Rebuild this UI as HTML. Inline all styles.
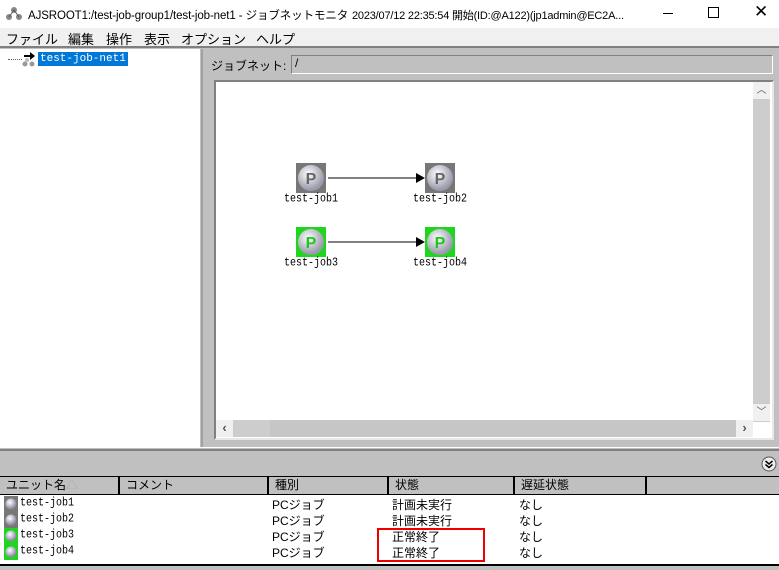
<!DOCTYPE html>
<html><head><meta charset="utf-8"><style>
*{margin:0;padding:0;box-sizing:border-box}
body{width:779px;height:570px;overflow:hidden;background:#c0c0c0;font-family:"Liberation Sans","Noto Sans CJK JP",sans-serif;position:relative;font-size:12px;color:#000}
.a{position:absolute}
.t{white-space:nowrap}
.ms{font-family:"Liberation Mono","Noto Sans CJK JP",monospace;font-size:11px}
.lbl{position:absolute;font-family:"Liberation Mono",monospace;font-size:10px;white-space:nowrap;transform:scaleY(1.2);transform-origin:0 0}
.hd{position:absolute;top:477px;height:18px;background:#c0c0c0;border-right:2px solid #000;border-bottom:1px solid #000;padding-left:6px;font-size:12px;line-height:17px}
.ic{position:absolute;left:4px;width:14px;height:16px}
.mn{position:absolute;top:29px;font-size:13px;white-space:nowrap}
</style></head><body>
<div class="a" style="left:0;top:0;width:779px;height:28px;background:#fff"></div>
<svg class="a" style="left:5px;top:6px" width="18" height="16"><circle cx="9" cy="4" r="3" fill="#888"/><circle cx="4" cy="11" r="3" fill="#888"/><circle cx="14" cy="11" r="3" fill="#888"/><path d="M9 4L4 11M9 4L14 11" stroke="#555"/></svg>
<div class="a t" style="left:28px;top:7px;font-size:11.5px;letter-spacing:-0.1px">AJSROOT1:/test-job-group1/test-job-net1 - ジョブネットモニタ</div>
<div class="a t" style="left:352px;top:7px;font-size:11px;letter-spacing:-0.2px">2023/07/12 22:35:54 開始(ID:@A122)(jp1admin@EC2A...</div>
<div class="a" style="left:645px;top:0;width:134px;height:28px;background:#fff"></div>
<div class="a" style="left:663px;top:13px;width:10px;height:1px;background:#000"></div>
<div class="a" style="left:708px;top:7px;width:11px;height:11px;border:1px solid #000"></div>
<div class="a t" style="left:754px;top:2px;font-size:17px">✕</div>
<div class="a" style="left:0;top:28px;width:779px;height:18px;background:#f0f0f0"></div>
<div class="mn" style="left:6px">ファイル</div>
<div class="mn" style="left:68px">編集</div>
<div class="mn" style="left:106px">操作</div>
<div class="mn" style="left:144px">表示</div>
<div class="mn" style="left:181px">オプション</div>
<div class="mn" style="left:256px">ヘルプ</div>
<div class="a" style="left:0;top:46px;width:779px;height:2px;background:#808080"></div>
<div class="a" style="left:0;top:49px;width:200px;height:398px;background:#fff"></div>
<div class="a" style="left:201px;top:49px;width:2px;height:398px;background:#a0a0a0"></div>
<div class="a" style="left:8px;top:59px;width:14px;border-top:1px dotted #666"></div>
<svg class="a" style="left:21px;top:51px" width="16" height="16"><path d="M3 4h6V1l5 4-5 4V6H3z" fill="#000"/><circle cx="4" cy="13" r="2.5" fill="#999"/><circle cx="11" cy="13" r="2.5" fill="#999"/><circle cx="6" cy="9" r="2" fill="#bbb"/></svg>
<div class="a ms" style="left:38px;top:52px;height:14px;padding:0 2px;background:#0078d7;color:#fff;line-height:14px;font-size:11px">test-job-net1</div>
<div class="a t" style="left:211px;top:57px;font-size:12px">ジョブネット:</div>
<div class="a" style="left:291px;top:55px;width:482px;height:19px;background:#c0c0c0;border-top:1px solid #808080;border-left:1px solid #808080;border-bottom:1px solid #fff;border-right:1px solid #fff;font-size:12px;padding-left:3px">/</div>
<div class="a" style="left:214px;top:80px;width:560px;height:360px;background:#fff;border-top:2px solid #808080;border-left:2px solid #808080;border-right:2px solid #e8e8e8;border-bottom:2px solid #e8e8e8"></div>
<div class="a" style="left:753px;top:82px;width:17px;height:340px;background:#cdcdcd"></div>
<div class="a" style="left:753px;top:82px;width:17px;height:17px;background:#f0f0f0;text-align:center;font-size:10px;color:#555;line-height:17px">︿</div>
<div class="a" style="left:753px;top:404px;width:17px;height:17px;background:#f0f0f0;text-align:center;font-size:10px;color:#555;line-height:17px">﹀</div>
<div class="a" style="left:216px;top:420px;width:522px;height:17px;background:#cdcdcd"></div>
<div class="a" style="left:216px;top:420px;width:17px;height:17px;background:#f0f0f0;text-align:center;font-size:13px;color:#555;line-height:16px;font-weight:bold">‹</div>
<div class="a" style="left:270px;top:420px;width:466px;height:17px;background:#c6c6c6"></div>
<div class="a" style="left:736px;top:420px;width:17px;height:17px;background:#f0f0f0;text-align:center;font-size:13px;color:#555;line-height:16px;font-weight:bold">›</div>

<svg class="a" style="left:296px;top:163px" width="160" height="95">
<defs><radialGradient id="g" cx="40%" cy="35%" r="60%"><stop offset="0" stop-color="#fff"/><stop offset="1" stop-color="#9a9aaa"/></radialGradient></defs>
<g><rect x="0" y="0" width="30" height="30" fill="#777"/><circle cx="15" cy="15" r="13" fill="url(#g)"/><text x="15" y="21" text-anchor="middle" font-family="Liberation Sans" font-weight="bold" font-size="16" fill="#666">P</text></g>
<g transform="translate(129,0)"><rect width="30" height="30" fill="#777"/><circle cx="15" cy="15" r="13" fill="url(#g)"/><text x="15" y="21" text-anchor="middle" font-family="Liberation Sans" font-weight="bold" font-size="16" fill="#666">P</text></g>
<g transform="translate(0,64)"><rect width="30" height="30" fill="#1ed61e"/><circle cx="15" cy="15" r="13" fill="url(#g)"/><text x="15" y="21" text-anchor="middle" font-family="Liberation Sans" font-weight="bold" font-size="16" fill="#1ec81e">P</text></g>
<g transform="translate(129,64)"><rect width="30" height="30" fill="#1ed61e"/><circle cx="15" cy="15" r="13" fill="url(#g)"/><text x="15" y="21" text-anchor="middle" font-family="Liberation Sans" font-weight="bold" font-size="16" fill="#1ec81e">P</text></g>
<path d="M32 15H120M32 79H120" stroke="#000"/><path d="M120 10l9 5-9 5zM120 74l9 5-9 5z" fill="#000"/>
</svg>
<div class="lbl" style="left:284px;top:193px">test-job1</div>
<div class="lbl" style="left:413px;top:193px">test-job2</div>
<div class="lbl" style="left:284px;top:257px">test-job3</div>
<div class="lbl" style="left:413px;top:257px">test-job4</div>

<div class="a" style="left:0;top:447px;width:779px;height:1px;background:#fff"></div>
<div class="a" style="left:0;top:449px;width:779px;height:2px;background:#808080"></div>
<svg class="a" style="left:761px;top:456px" width="16" height="16"><circle cx="8" cy="8" r="7" fill="#eee" stroke="#555"/><path d="M4.5 5l3.5 3 3.5-3M4.5 8.5l3.5 3 3.5-3" stroke="#000" stroke-width="1.5" fill="none"/></svg>
<div class="a" style="left:0;top:476px;width:779px;height:90px;background:#fff;border-top:1px solid #000;border-bottom:2px solid #000"></div>
<div class="hd" style="left:0;width:120px">ユニット名<span style="color:#aaa">△</span></div>
<div class="hd" style="left:120px;width:149px">コメント</div>
<div class="hd" style="left:269px;width:120px">種別</div>
<div class="hd" style="left:389px;width:126px">状態</div>
<div class="hd" style="left:515px;width:132px">遅延状態</div>
<div class="hd" style="left:647px;width:132px;border-right:none"></div>
<div class="ic" style="top:496px;background:#777"></div><div class="ic" style="top:512px;background:#777"></div>
<div class="ic" style="top:528px;background:#1ed61e"></div><div class="ic" style="top:544px;background:#1ed61e"></div>
<svg class="a" style="left:5px;top:497px" width="12" height="64"><defs><radialGradient id="h" cx="40%" cy="35%" r="60%"><stop offset="0" stop-color="#fff"/><stop offset="1" stop-color="#8888a0"/></radialGradient></defs><circle cx="6" cy="7" r="5.5" fill="url(#h)"/><circle cx="6" cy="23" r="5.5" fill="url(#h)"/><circle cx="6" cy="39" r="5.5" fill="url(#h)"/><circle cx="6" cy="55" r="5.5" fill="url(#h)"/></svg>
<div class="lbl" style="left:20px;top:497px">test-job1</div>
<div class="lbl" style="left:20px;top:513px">test-job2</div>
<div class="lbl" style="left:20px;top:529px">test-job3</div>
<div class="lbl" style="left:20px;top:545px">test-job4</div>
<div class="a t" style="left:272px;top:497px;font-size:12px;line-height:16px">PCジョブ<br>PCジョブ<br>PCジョブ<br>PCジョブ</div>
<div class="a t" style="left:392px;top:497px;font-size:12px;line-height:16px">計画未実行<br>計画未実行<br>正常終了<br>正常終了</div>
<div class="a t" style="left:519px;top:497px;font-size:12px;line-height:16px">なし<br>なし<br>なし<br>なし</div>
<div class="a" style="left:377px;top:528px;width:108px;height:34px;border:2px solid #e00"></div>
</body></html>
